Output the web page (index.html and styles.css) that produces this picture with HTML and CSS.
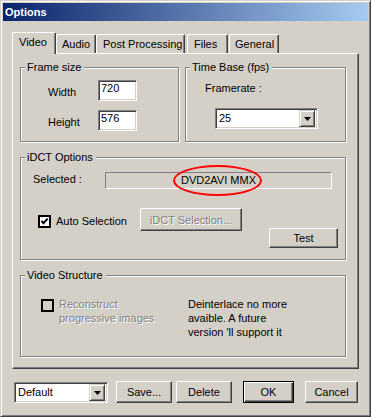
FILE: index.html
```html
<!DOCTYPE html>
<html lang="en">
<head>
    <meta charset="utf-8" />
    <title>Options</title>
    <link rel="stylesheet" href="styles.css">
</head>
<body>
    <div class="window">
        <div class="titlebar">Options</div>

        <div class="client">
            <div class="tabs">
                <div class="tab selected tab-video">Video</div>
                <div class="tab tab-audio">Audio</div>
                <div class="tab tab-post">Post Processing</div>
                <div class="tab tab-files">Files</div>
                <div class="tab tab-general">General</div>
            </div>

            <div class="panel">
                <div class="top-groups">
                    <fieldset class="group frame-size">
                        <legend>Frame size</legend>
                        <div class="field-row">
                            <span class="field-label">Width</span>
                            <div class="edit">720</div>
                        </div>
                        <div class="field-row">
                            <span class="field-label">Height</span>
                            <div class="edit">576</div>
                        </div>
                    </fieldset>

                    <fieldset class="group time-base">
                        <legend>Time Base (fps)</legend>
                        <div class="framerate-label">Framerate :</div>
                        <div class="combo framerate">
                            <span class="combo-text">25</span>
                            <span class="combo-btn">
                                <svg width="7" height="4" viewBox="0 0 7 4"><polygon points="0,0 7,0 3.5,4" fill="#000"/></svg>
                            </span>
                        </div>
                    </fieldset>
                </div>

                <fieldset class="group idct">
                    <legend>iDCT Options</legend>
                    <div class="selected-row">
                        <span class="selected-label">Selected :</span>
                        <div class="static-field">DVD2AVI MMX<span class="mark"></span></div>
                    </div>
                    <div class="auto-row">
                        <div class="check-item auto-check">
                            <span class="checkbox">
                                <svg width="9" height="9" viewBox="0 0 9 9"><polyline points="1.5,4 3.5,6.2 7.6,1.6" fill="none" stroke="#000" stroke-width="2"/></svg>
                            </span>
                            <span>Auto Selection</span>
                        </div>
                        <button class="btn idct-sel" disabled>iDCT Selection...</button>
                        <button class="btn test">Test</button>
                    </div>
                </fieldset>

                <fieldset class="group structure">
                    <legend>Video Structure</legend>
                    <div class="structure-row">
                        <div class="check-item reconstruct">
                            <span class="checkbox off"></span>
                            <span class="disabled-text">Reconstruct<br>progressive images</span>
                        </div>
                        <div class="note">Deinterlace no more<br>avaible. A future<br>version 'll support it</div>
                    </div>
                </fieldset>
            </div>

            <div class="footer">
                <div class="combo preset">
                    <span class="combo-text">Default</span>
                    <span class="combo-btn">
                        <svg width="7" height="4" viewBox="0 0 7 4"><polygon points="0,0 7,0 3.5,4" fill="#000"/></svg>
                    </span>
                </div>
                <button class="btn save">Save...</button>
                <button class="btn delete">Delete</button>
                <button class="btn ok">OK</button>
                <button class="btn cancel">Cancel</button>
            </div>
        </div>
    </div>
</body>
</html>
```

FILE: styles.css
```css
html, body {
    margin: 0;
    padding: 0;
    background: #d4d0c8;
}

body {
    font-family: "Liberation Sans", Arial, sans-serif;
    font-size: 11px;
    color: #000;
}

.window {
    width: 371px;
    height: 417px;
    box-sizing: border-box;
    border: 1px solid;
    border-color: #d4d0c8 #404040 #404040 #d4d0c8;
    box-shadow: inset 1px 1px #fff, inset -1px -1px #808080;
    padding: 2px;
    display: flex;
    flex-direction: column;
}

.titlebar {
    height: 18px;
    line-height: 18px;
    padding-left: 2px;
    color: #fff;
    font-weight: bold;
    background: linear-gradient(to right, #0a246a, #a6caf0);
}

.client {
    flex: 1;
    padding: 11px 9px 11px 9px;
}

/* tabs */

.tabs {
    display: flex;
    align-items: flex-end;
    height: 21px;
}

.tab {
    box-sizing: border-box;
    height: 19px;
    padding: 1px 0 0 6px;
    line-height: 17px;
    border-top: 1px solid #fff;
    border-left: 1px solid #fff;
    border-right: 1px solid #404040;
    border-radius: 2px 2px 0 0;
    box-shadow: inset -1px 0 #808080;
    white-space: nowrap;
}

.tab.selected {
    height: 22px;
    margin-bottom: -1px;
    padding-left: 6px;
    position: relative;
    z-index: 1;
    background: #d4d0c8;
}

.tab-video { width: 44px; }
.tab-audio { width: 40px; padding-left: 5px; }
.tab-post { width: 89px; }
.tab-files { width: 41px; margin-left: 2px; }
.tab-general { width: 50px; margin-left: 1px; padding-left: 5px; }

.panel {
    height: 316px;
    box-sizing: border-box;
    border: 1px solid;
    border-color: #fff #404040 #404040 #fff;
    box-shadow: inset -1px -1px #808080;
    padding: 7px 12px 11px 7px;
    display: flex;
    flex-direction: column;
}

/* group boxes */

.group {
    margin: 0;
    padding: 0;
    min-width: 0;
    border: 1px solid #808080;
    box-shadow: 1px 1px #fff, inset 1px 1px #fff;
}

.group legend {
    margin-left: 4px;
    padding: 0 3px 0 2px;
    line-height: 13px;
    background: #d4d0c8;
}

.top-groups {
    display: flex;
    gap: 6px;
}

.frame-size {
    width: 159px;
    box-sizing: border-box;
    padding: 6px 0 10px 0;
    display: flex;
    flex-direction: column;
    gap: 9px;
}

.field-row {
    display: flex;
    align-items: center;
    height: 21px;
    padding-left: 27px;
}

.field-label {
    width: 50px;
    padding-top: 2px;
}

.edit {
    width: 39px;
    height: 21px;
    box-sizing: border-box;
    border: 1px solid;
    border-color: #808080 #fff #fff #808080;
    box-shadow: inset 1px 1px #404040, inset -1px -1px #d4d0c8;
    background: #fff;
    padding: 1px 0 0 2px;
    line-height: 13px;
}

.time-base {
    width: 161px;
    box-sizing: border-box;
    padding: 8px 0 0 0;
}

.framerate-label {
    line-height: 13px;
    padding-left: 19px;
}

.combo {
    box-sizing: border-box;
    height: 21px;
    border: 1px solid;
    border-color: #808080 #fff #fff #808080;
    box-shadow: inset 1px 1px #404040, inset -1px -1px #d4d0c8;
    background: #fff;
    padding: 2px;
    display: flex;
    align-items: center;
}

.combo-text {
    flex: 1;
    padding-left: 1px;
    line-height: 17px;
}

.combo-btn {
    box-sizing: border-box;
    width: 16px;
    height: 17px;
    border: 1px solid;
    border-color: #d4d0c8 #404040 #404040 #d4d0c8;
    box-shadow: inset 1px 1px #fff, inset -1px -1px #808080;
    background: #d4d0c8;
    display: flex;
    align-items: center;
    justify-content: center;
}

.framerate {
    width: 103px;
    margin: 13px 0 0 29px;
}

/* iDCT options */

.idct {
    margin-top: 9px;
    padding: 8px 7px 11px 0;
}

.selected-row {
    display: flex;
    align-items: flex-start;
    padding-left: 12px;
}

.selected-label {
    width: 72px;
    line-height: 13px;
    margin-top: 1px;
}

.static-field {
    position: relative;
    width: 227px;
    height: 17px;
    box-sizing: border-box;
    border: 1px solid;
    border-color: #808080 #fff #fff #808080;
    text-align: center;
    line-height: 15px;
}

.mark {
    position: absolute;
    left: 67px;
    top: -8px;
    width: 89px;
    height: 31px;
    box-sizing: border-box;
    border: 2px solid #f00;
    border-radius: 50%;
}

.auto-row {
    display: flex;
    align-items: flex-start;
    height: 40px;
    margin-top: 19px;
    padding-left: 17px;
}

.check-item {
    display: flex;
    align-items: center;
    gap: 5px;
}

.auto-check {
    width: 102px;
    height: 20px;
    margin-top: 3px;
    box-sizing: border-box;
}

.checkbox {
    flex: none;
    box-sizing: border-box;
    width: 13px;
    height: 13px;
    border: 2px solid #000;
    background: #fff;
    display: flex;
    align-items: center;
    justify-content: center;
}

.checkbox.off {
    background: #d4d0c8;
}

.btn {
    font: inherit;
    color: #000;
    margin: 0;
    padding: 0;
    box-sizing: border-box;
    height: 22px;
    background: #d4d0c8;
    border: 1px solid;
    border-color: #fff #404040 #404040 #fff;
    box-shadow: inset -1px -1px #808080;
    text-align: center;
}

.btn:disabled {
    color: #808080;
    text-shadow: 1px 1px #fff;
}

.idct-sel {
    width: 102px;
    height: 23px;
}

.test {
    width: 69px;
    height: 20px;
    margin-left: auto;
    align-self: flex-end;
}

/* video structure */

.structure {
    margin-top: 9px;
    padding: 15px 0 17px 0;
}

.structure-row {
    display: flex;
    align-items: flex-start;
    line-height: 14px;
    padding-left: 20px;
}

.reconstruct {
    width: 147px;
    align-items: flex-start;
}

.reconstruct .checkbox {
    margin-top: 2px;
}

.disabled-text {
    color: #808080;
    text-shadow: 1px 1px #fff;
}

/* bottom buttons */

.footer {
    display: flex;
    align-items: flex-end;
    margin-top: 12px;
}

.preset {
    width: 94px;
    margin-left: 2px;
}

.save { width: 56px; margin-left: 8px; }
.delete { width: 56px; margin-left: 4px; }
.cancel { width: 53px; margin-left: 11px; }

.ok {
    width: 51px;
    margin-left: 11px;
    border: 1px solid #000;
    box-shadow: inset 1px 1px #fff, inset -1px -1px #404040, inset -2px -2px #808080;
}
```
